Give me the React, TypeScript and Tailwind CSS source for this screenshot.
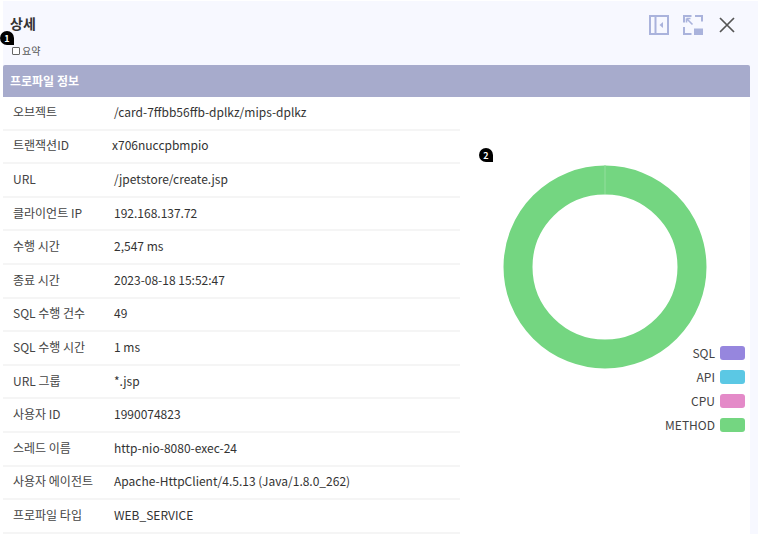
const rows: [string, string, string?][] = [
  ["오브젝트", "/card-7ffbb56ffb-dplkz/mips-dplkz"],
  ["트랜잭션ID", "x706nuccpbmpio", "-ml-[2px]"],
  ["URL", "/jpetstore/create.jsp"],
  ["클라이언트 IP", "192.168.137.72"],
  ["수행 시간", "2,547 ms"],
  ["종료 시간", "2023-08-18 15:52:47"],
  ["SQL 수행 건수", "49"],
  ["SQL 수행 시간", "1 ms"],
  ["URL 그룹", "*.jsp"],
  ["사용자 ID", "1990074823"],
  ["스레드 이름", "http-nio-8080-exec-24"],
  ["사용자 에이전트", "Apache-HttpClient/4.5.13 (Java/1.8.0_262)"],
  ["프로파일 타입", "WEB_SERVICE"],
];

const legend = [
  { name: "SQL", color: "bg-[#9686de]" },
  { name: "API", color: "bg-[#5bc8e4]" },
  { name: "CPU", color: "bg-[#e48ac8]" },
  { name: "METHOD", color: "bg-[#74d681]" },
];

function Marker({ n }: { n: number }) {
  return (
    <span className="flex h-[14px] w-[14px] items-center justify-center rounded-full rounded-br-none bg-black text-[9px] font-bold leading-none text-white">
      {n}
    </span>
  );
}

export default function App() {
  return (
    <div className="h-[534px] w-[758px] overflow-hidden bg-white pl-[3px] pt-[1px] font-['Noto_Sans_CJK_KR','Noto_Sans',sans-serif] text-[12px] text-[#333]">
      <div className="h-[533px] bg-[#f7f8ff] pr-2">
        <header className="relative h-[64px] pl-[7px] pt-[12px]">
          <h1 className="text-[14px] font-bold leading-[20px] text-[#333]">상세</h1>
          <div className="absolute left-[-3px] top-[30px]">
            <Marker n={1} />
          </div>
          <label className="mt-[11px] flex h-[14px] items-center gap-[2px] pl-[2px] text-[10px] leading-none text-[#555]">
            <span className="h-[8px] w-[8px] rounded-[1px] border border-[#666] bg-white" />
            요약
          </label>
          <div className="absolute right-[14px] top-[14px] flex items-center">
            <svg width="20" height="20" viewBox="0 0 20 20" fill="none" className="mr-[14px]">
              <rect x="1" y="1" width="18" height="18" stroke="#aab3dc" strokeWidth="2" />
              <path d="M6.5 1v18" stroke="#aab3dc" strokeWidth="2" />
              <path d="M14 7v6l-3.5-3z" fill="#aab3dc" />
            </svg>
            <svg width="20" height="20" viewBox="0 0 20 20" fill="none" className="mr-[15px]">
              <path d="M1 7.5V1H8.5M12 1h7V6.5M1 12v7H8.5" stroke="#aab3dc" strokeWidth="2" />
              <path d="M3.5 3.5l6 6M3.5 3.5h4M3.5 3.5v4" stroke="#aab3dc" strokeWidth="1.6" />
              <rect x="11" y="13.5" width="9" height="6.5" fill="#aab3dc" />
            </svg>
            <svg width="18" height="18" viewBox="0 0 18 18" fill="none">
              <path d="M2 2l14 14M16 2L2 16" stroke="#555" strokeWidth="1.7" />
            </svg>
          </div>
        </header>
        <section className="rounded-t-[2px] bg-[#a7abcc] py-[7px] pl-[7px] text-[12px] font-bold leading-[18px] text-white">
          프로파일 정보
        </section>
        <div className="flex bg-white">
          <div className="w-[457px] shrink-0">
            {rows.map(([label, value, shift]) => (
              <div key={label} className="flex h-[33.6px] items-center border-b-[2px] border-[#f5f5f5] pb-[2px] pl-[10px]">
                <span className="w-[101px] shrink-0 text-[#444]">{label}</span>
                <span className={`text-[#333] ${shift ?? ""}`}>{value}</span>
              </div>
            ))}
          </div>
          <div className="relative flex-1">
            <div className="absolute left-[19px] top-[51px]">
              <Marker n={2} />
            </div>
            <svg width="204" height="204" viewBox="0 0 204 204" className="absolute left-[43px] top-[68px]">
              <circle cx="102" cy="102" r="87" fill="none" stroke="#74d681" strokeWidth="29" />
              <path d="M102 0v29" stroke="#93de9d" strokeWidth="1" />
            </svg>
            <div className="absolute right-[5px] top-[249px] flex flex-col items-end gap-[10px]">
              {legend.map((item) => (
                <div key={item.name} className="flex h-[14px] items-center gap-[5px] text-[#444]">
                  <span>{item.name}</span>
                  <span className={`h-[14px] w-[25px] rounded-[3px] ${item.color}`} />
                </div>
              ))}
            </div>
          </div>
        </div>
      </div>
    </div>
  );
}
